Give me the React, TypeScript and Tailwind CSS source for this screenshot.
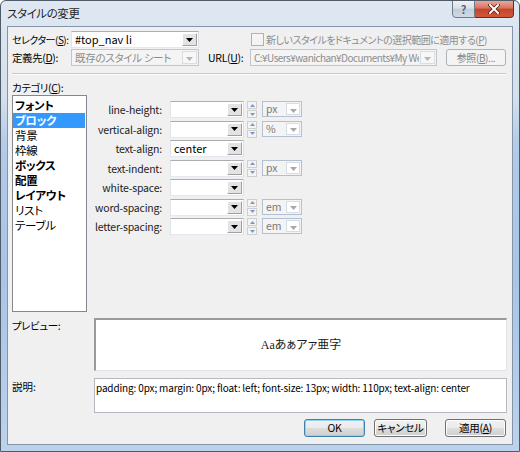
import React from 'react';

const FONT = "font-['Noto_Sans_CJK_JP',sans-serif] [font-feature-settings:'palt'] whitespace-nowrap";

function DownArrow({ color = '#000' }: { color?: string }) {
  return (
    <svg width="7" height="4" viewBox="0 0 7 4">
      <path d="M0 0h7L3.5 4z" fill={color} />
    </svg>
  );
}

function Combo({ width, value }: { width: string; value?: string }) {
  return (
    <div className={`flex h-[17px] shrink-0 ${width} border border-[#abadb3] border-l-[#e2e3ea] border-r-[#dbdfe6] border-b-[#e3e9ef] bg-white`}>
      <span className="flex-1 overflow-hidden pl-[3px] text-[11px] leading-[15px] text-black">{value}</span>
      <div className="m-[1px] flex w-[15px] items-center justify-center border border-t-white border-l-white border-r-[#a0a0a0] border-b-[#a0a0a0] bg-[#e3e3e3]">
        <DownArrow />
      </div>
    </div>
  );
}

function DisabledCombo({ width, value, tight }: { width: string; value: string; tight?: boolean }) {
  return (
    <div className={`flex h-[17px] shrink-0 ${width} border border-[#c2c6cc] bg-[#f4f4f4]`}>
      <span
        className={`min-w-0 flex-1 overflow-hidden pl-[3px] leading-[15px] text-[#8d8d8d] ${
          tight ? 'text-[10px] tracking-[-0.55px]' : 'text-[10.5px] tracking-[-0.3px]'
        }`}
      >
        {value}
      </span>
      <div className="m-[1px] flex w-[15px] shrink-0 items-center justify-center border border-[#d9dde2] bg-[#f7f7f7] pt-[3px]">
        <DownArrow color="#b4b4b4" />
      </div>
    </div>
  );
}

function Spinner() {
  return (
    <div className="ml-[3px] flex h-[17px] w-[10px] flex-col gap-[1px]">
      <div className="flex flex-1 items-center justify-center border border-[#cfcfcf] bg-[#f4f4f4]">
        <svg width="5" height="3" viewBox="0 0 5 3">
          <path d="M0 3h5L2.5 0z" fill="#7b97c3" />
        </svg>
      </div>
      <div className="flex flex-1 items-center justify-center border border-[#cfcfcf] bg-[#f4f4f4]">
        <svg width="5" height="3" viewBox="0 0 5 3">
          <path d="M0 0h5L2.5 3z" fill="#7b97c3" />
        </svg>
      </div>
    </div>
  );
}

function UnitCombo({ unit }: { unit: string }) {
  return (
    <div className="ml-[5px] flex h-[16px] w-[40px] border border-[#b3c0d1] bg-[#f4f4f4] p-[1px]">
      <span className="flex-1 pl-[2px] text-[10.5px] leading-[12px] text-[#7a7a7a]">{unit}</span>
      <div className="flex w-[14px] items-center justify-center border border-[#d5dde6] bg-white pt-[3px]">
        <DownArrow color="#a8a8a8" />
      </div>
    </div>
  );
}

const CATEGORIES = [
  { name: 'フォント', bold: true },
  { name: 'ブロック', bold: true, selected: true },
  { name: '背景' },
  { name: '枠線' },
  { name: 'ボックス', bold: true },
  { name: '配置', bold: true },
  { name: 'レイアウト', bold: true },
  { name: 'リスト' },
  { name: 'テーブル' },
];

const PROPS: { label: string; value?: string; unit?: string }[] = [
  { label: 'line-height:', unit: 'px' },
  { label: 'vertical-align:', unit: '%' },
  { label: 'text-align:', value: 'center' },
  { label: 'text-indent:', unit: 'px' },
  { label: 'white-space:' },
  { label: 'word-spacing:', unit: 'em' },
  { label: 'letter-spacing:', unit: 'em' },
];

function Button({ children, width, focused }: { children: React.ReactNode; width: string; focused?: boolean }) {
  return (
    <button
      className={`flex h-[18px] ${width} items-center justify-center rounded-[3px] border text-[10.5px] tracking-[-0.3px] text-black ${
        focused
          ? 'border-[#3c7fb1] bg-[linear-gradient(180deg,#f2f2f2_0%,#ebebeb_50%,#dddddd_51%,#cfcfcf_100%)] shadow-[inset_0_0_0_1px_#8fd3f5]'
          : 'border-[#707070] bg-[linear-gradient(180deg,#f2f2f2_0%,#ebebeb_50%,#dddddd_51%,#cfcfcf_100%)] shadow-[inset_0_0_0_1px_#fcfcfc]'
      }`}
    >
      {children}
    </button>
  );
}

export default function App() {
  return (
    <div className={`${FONT} flex h-[452px] w-[520px] flex-col overflow-hidden rounded-t-[6px] border border-[#4f5b68] bg-[linear-gradient(180deg,#dfe8f2_0%,#d3dfec_22%,#b2cbe8_32%,#a9c4e6_60%,#bcd2ec_100%)]`}>
      {/* title bar */}
      <div className="flex h-[25px] items-start justify-between">
        <span className="pl-[6px] pt-[4px] text-[11.5px] leading-[16px] tracking-[-0.4px] text-[#1e1e1e]">スタイルの変更</span>
        <div className="mr-[5px] flex h-[18px] -mt-px">
          <div className="flex w-[23px] items-center justify-center rounded-bl-[4px] border border-[#6f7a86] bg-[linear-gradient(180deg,#eef2f7_0%,#d9e1ea_45%,#c2cdda_50%,#cfd9e4_100%)] text-[11px] font-bold text-[#5a6470]">
            ?
          </div>
          <div className="flex w-[39px] items-center justify-center rounded-br-[4px] border border-l-0 border-[#6b2a22] bg-[linear-gradient(180deg,#e9a897_0%,#d7725c_45%,#c4442b_50%,#d2583a_100%)]">
            <svg width="12" height="10" viewBox="0 0 12 10">
              <path d="M2 1l8 8M10 1L2 9" stroke="#4a1a12" strokeWidth="3.4" strokeLinecap="square" />
              <path d="M2 1l8 8M10 1L2 9" stroke="#fff" strokeWidth="2" strokeLinecap="square" />
            </svg>
          </div>
        </div>
      </div>

      {/* client area */}
      <div className="ml-[6px] flex h-[419px] w-[506px] flex-col border border-[#8495aa] bg-[#f0f0f0] pl-[4px] pt-[4px] text-[11px] text-black">
        {/* selector row */}
        <div className="flex h-[17px] items-center">
          <span className="w-[59px] shrink-0 text-[10px] leading-[13px] tracking-[-0.5px]">
            セレクター(<span className="underline">S</span>):
          </span>
          <Combo width="w-[128px]" value="#top_nav li" />
          <div className="ml-[52px] h-[13px] w-[13px] shrink-0 border border-[#b1b1b1] bg-[#f4f4f4]" />
          <span className="ml-[2px] text-[10px] leading-[13px] tracking-[-0.5px] text-[#8d8d8d]">
            新しいスタイルをドキュメントの選択範囲に適用する(<span className="underline">P</span>)
          </span>
        </div>

        {/* define row */}
        <div className="mt-[1px] flex h-[17px] items-center">
          <span className="w-[59px] shrink-0 text-[10.5px] leading-[13px] tracking-[-0.4px]">
            定義先(<span className="underline">D</span>):
          </span>
          <DisabledCombo width="w-[128px]" value="既存のスタイル シート" />
          <span className="ml-[9px] w-[42px] shrink-0 text-[10.5px] leading-[13px] tracking-[-0.3px]">
            URL(<span className="underline">U</span>):
          </span>
          <DisabledCombo width="w-[187px]" value="C:¥Users¥wanichan¥Documents¥My We" tight />
          <div className="ml-[9px] flex h-[17px] w-[60px] shrink-0 items-center justify-center rounded-[3px] border border-[#adb2b5] bg-[#f4f4f4] text-[10px] tracking-[-0.4px] text-[#838383]">
            参照(<span className="underline">B</span>)...
          </div>
        </div>

        {/* separator */}
        <div className="mt-[7px] w-[494px] border-t border-b border-t-[#c8c8c8] border-b-white" />

        <div className="mt-[6px] h-[14px] text-[10.5px] leading-[13px] tracking-[-0.4px]">
          カテゴリ(<span className="underline">C</span>):
        </div>

        {/* category + properties */}
        <div className="flex h-[217px]">
          <div className="flex w-[75px] shrink-0 flex-col border border-[#828790] bg-white pt-[2px]">
            {CATEGORIES.map((c) => (
              <div
                key={c.name}
                className={`mr-[1px] h-[15px] pl-[2px] text-[11.5px] leading-[15px] tracking-[-0.3px] ${c.bold ? 'font-bold' : ''} ${
                  c.selected ? 'bg-[#3399ff] text-white' : 'text-black'
                }`}
              >
                {c.name}
              </div>
            ))}
          </div>

          <div className="flex flex-col pt-[6px]">
            {PROPS.map((p) => (
              <div key={p.label} className="flex h-[19.5px] items-start">
                <span className="w-[75px] shrink-0 pt-[2px] text-right text-[10.5px] leading-[13px] tracking-[-0.2px] text-[#1e1e1e]">
                  {p.label}
                </span>
                <div className="ml-[8px]">
                  <Combo width="w-[74px]" value={p.value} />
                </div>
                {p.unit && (
                  <>
                    <Spinner />
                    <UnitCombo unit={p.unit} />
                  </>
                )}
              </div>
            ))}
          </div>
        </div>

        {/* preview */}
        <div className="mt-[6px] flex">
          <span className="w-[82px] shrink-0 pt-[1px] text-[10.5px] leading-[13px] tracking-[-0.4px]">プレビュー:</span>
          <div className="flex h-[53px] w-[413px] items-center justify-center border-t-2 border-l-2 border-r border-b border-t-[#9a9a9a] border-l-[#9a9a9a] border-r-[#e3e3e3] border-b-[#e3e3e3] bg-white">
            <span className="font-['Liberation_Serif','Noto_Sans_CJK_JP',serif] text-[12px] text-[#222]">Aaあぁアァ亜字</span>
          </div>
        </div>

        {/* description */}
        <div className="mt-[7px] flex">
          <span className="w-[82px] shrink-0 pt-[2px] text-[10.5px] leading-[13px]">説明:</span>
          <div className="h-[35px] w-[413px] overflow-hidden border border-[#b5b9bf] bg-white pl-[1px] pt-[2px] text-[10px] leading-[13px] tracking-[-0.15px]">
            padding: 0px; margin: 0px; float: left; font-size: 13px; width: 110px; text-align: center
          </div>
        </div>

        {/* buttons */}
        <div className="mt-[6px] flex w-[494px] justify-end">
          <Button width="w-[61px]" focused>
            OK
          </Button>
          <div className="ml-[9px]">
            <Button width="w-[53px]">キャンセル</Button>
          </div>
          <div className="ml-[18px]">
            <Button width="w-[61px]">
              適用(<span className="underline">A</span>)
            </Button>
          </div>
        </div>
      </div>
    </div>
  );
}
